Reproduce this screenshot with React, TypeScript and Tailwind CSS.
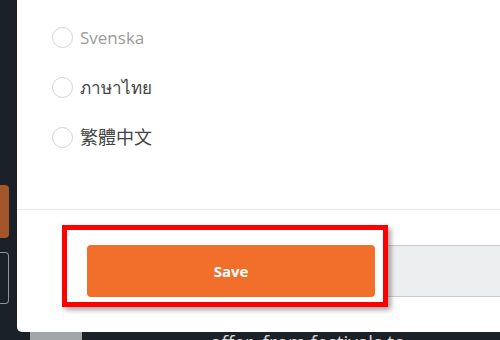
const font = { fontFamily: '"Open Sans", "Noto Sans", "Noto Sans CJK TC", sans-serif' };

const languages = [
  { label: "Svenska", tone: "text-[#9b9b9b] text-[17px]" },
  { label: "ภาษาไทย", tone: "text-[#444] text-[17px]" },
  { label: "繁體中文", tone: "text-[#444] text-[18px]" },
];

function RadioRow({ label, tone }: { label: string; tone: string }) {
  return (
    <label className="flex h-[50px] items-center gap-[7px]">
      <span className="h-[21px] w-[21px] shrink-0 rounded-full border-[1.5px] border-[#d4d4d4] bg-white" />
      <span className={`leading-none ${tone}`}>{label}</span>
    </label>
  );
}

export default function App() {
  return (
    <div className="flex h-[340px] w-[500px] flex-col overflow-hidden bg-[#1b2128]" style={font}>
      <div className="flex h-[332px] shrink-0">
        {/* page behind the modal */}
        <div className="flex w-[17px] shrink-0 flex-col pt-[185px]">
          <div className="h-[53px] w-[9px] rounded-r-[4px] bg-[#a4552a]" />
          <div className="mt-[14px] h-[52px] w-[9px] rounded-r-[4px] border border-l-0 border-[#8d939b]" />
        </div>

        <div className="flex min-w-0 flex-1 flex-col rounded-bl-[5px] bg-white">
          <div className="pl-[35px] pt-[12px] pb-[47px]">
            {languages.map((lang) => (
              <RadioRow key={lang.label} label={lang.label} tone={lang.tone} />
            ))}
          </div>
          <div className="h-px bg-[#ececec]" />
          <div className="flex items-start pt-[15px]">
            <div className="relative z-10 ml-[45px] shrink-0 border-[5px] border-[#ff0000] bg-white pt-[15px] pr-[8px] pb-[5px] pl-[20px] shadow-[3px_3px_5px_rgba(0,0,0,0.35)]">
              <button className="flex h-[52px] w-[288px] items-center justify-center rounded-[4px] bg-[#f26e2b] text-[15px] font-bold text-white">
                Save
              </button>
            </div>
            <div className="mt-[20px] h-[52px] flex-1 border-y border-[#c9cbce] bg-[#eceef0]" />
          </div>
        </div>
      </div>

      <div className="flex h-[8px] shrink-0 items-start">
        <div className="ml-[30px] h-[8px] w-[52px] bg-[#a3a6a9]" />
        <p className="ml-[128px] mt-[-2px] whitespace-nowrap text-[19px] leading-[24px] text-[#d8d8d8]">
          offer, from festivals to
        </p>
      </div>
    </div>
  );
}
